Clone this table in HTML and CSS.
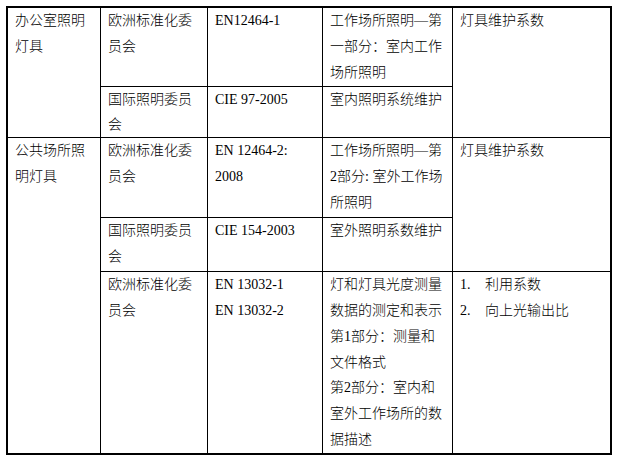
FILE: index.html
```html
<!DOCTYPE html>
<html lang="zh-CN">
<head>
<meta charset="utf-8">
<title>标准</title>
<link rel="stylesheet" href="styles.css">
</head>
<body>
<table class="std">
  <colgroup>
    <col class="c1"><col class="c2"><col class="c3"><col class="c4"><col class="c5">
  </colgroup>
  <tr class="r1">
    <td rowspan="2">办公室照明灯具</td>
    <td>欧洲标准化委员会</td>
    <td>EN12464-1</td>
    <td>工作场所照明—第一部分：室内工作场所照明</td>
    <td rowspan="2" class="last">灯具维护系数</td>
  </tr>
  <tr class="r2">
    <td>国际照明委员会</td>
    <td>CIE 97-2005</td>
    <td>室内照明系统维护</td>
  </tr>
  <tr class="r3">
    <td rowspan="3" class="bottom">公共场所照明灯具</td>
    <td>欧洲标准化委员会</td>
    <td>EN 12464-2:<br>2008</td>
    <td>工作场所照明—第2部分: 室外工作场所照明</td>
    <td rowspan="2" class="last">灯具维护系数</td>
  </tr>
  <tr class="r4">
    <td>国际照明委员会</td>
    <td>CIE 154-2003</td>
    <td>室外照明系数维护</td>
  </tr>
  <tr class="r5">
    <td class="bottom">欧洲标准化委员会</td>
    <td class="bottom">EN 13032-1<br>EN 13032-2</td>
    <td class="bottom">灯和灯具光度测量数据的测定和表示<br>第1部分：测量和文件格式<br>第2部分：室内和室外工作场所的数据描述</td>
    <td class="bottom last">
      <ol class="items">
        <li><span class="num">1.</span><span>利用系数</span></li>
        <li><span class="num">2.</span><span>向上光输出比</span></li>
      </ol>
    </td>
  </tr>
</table>
</body>
</html>
```
FILE: styles.css
```css
html, body {
  margin: 0;
  padding: 0;
  background: #fff;
}

.std {
  margin: 6px 0 0 6px;
  width: 606px;
  table-layout: fixed;
  border-collapse: separate;
  border-spacing: 0;
  border: 2px solid #000;
  font-family: "Liberation Serif", "Noto Sans CJK SC", serif;
  font-size: 14px;
  font-weight: 300;
  line-height: 26px;
  color: #000;
}

.c1 { width: 93px; }
.c2 { width: 107px; }
.c3 { width: 115px; }
.c4 { width: 130px; }
.c5 { width: 157px; }

.std td {
  vertical-align: top;
  padding: 0 7px;
  border-right: 1px solid #000;
  border-bottom: 1px solid #000;
  overflow: hidden;
}

.std td.last { border-right: 0; }
.std td.bottom { border-bottom: 0; }

.r1 { height: 79px; }
.r2 { height: 51px; }
.r2 td { line-height: 25px; }
.r3 { height: 80px; }
.r4 { height: 54px; }
.r5 { height: 181px; }
.r5 td { line-height: 25.85px; }

.items {
  list-style: none;
  margin: 0;
  padding: 0;
}

.items li {
  display: flex;
}

.items .num {
  width: 25px;
  flex: none;
}
```
